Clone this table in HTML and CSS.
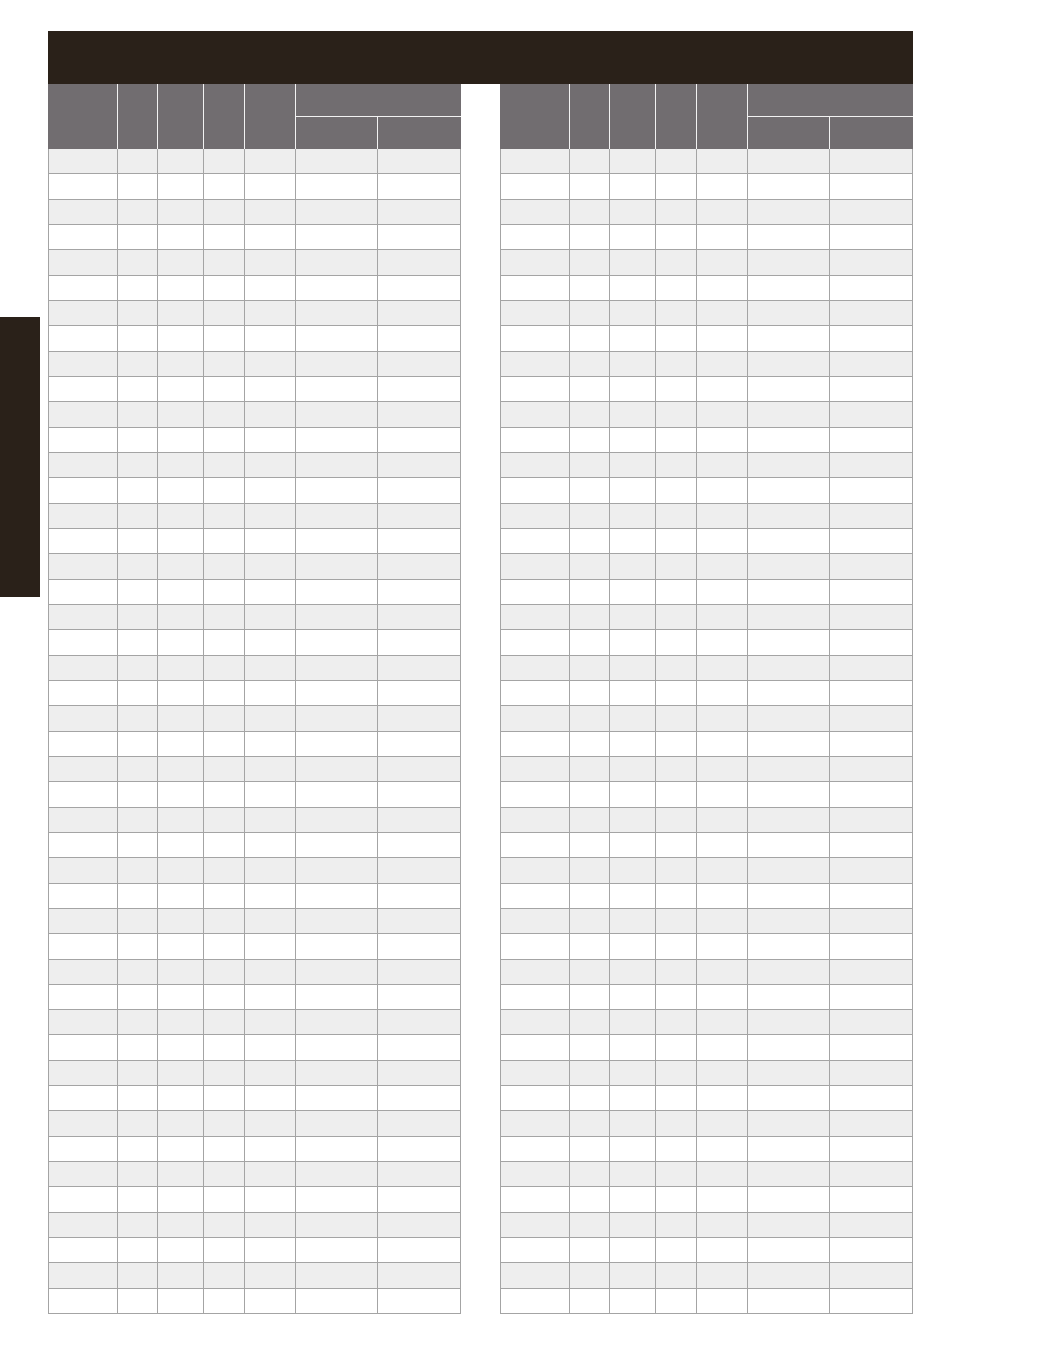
FILE: index.html
```html
<!DOCTYPE html>
<html lang="en">
<head>
<meta charset="utf-8">
<title>Table sheet</title>
<link rel="stylesheet" href="styles.css">
</head>
<body>
<div class="page">
  <div class="tab-col"><div class="side-tab"></div></div>
  <main class="main">
    <div class="banner"></div>
    <div class="tables">
      <table class="grid">
        <colgroup><col class="c1"><col class="c2"><col class="c3"><col class="c4"><col class="c5"><col class="c6"><col class="c7"></colgroup>
        <thead>
          <tr class="h1"><th rowspan="2"></th><th rowspan="2"></th><th rowspan="2"></th><th rowspan="2"></th><th rowspan="2"></th><th colspan="2" class="group"></th></tr>
          <tr class="h2"><th></th><th class="last"></th></tr>
        </thead>
        <tbody>
          <tr><td></td><td></td><td></td><td></td><td></td><td></td><td></td></tr>
          <tr><td></td><td></td><td></td><td></td><td></td><td></td><td></td></tr>
          <tr><td></td><td></td><td></td><td></td><td></td><td></td><td></td></tr>
          <tr><td></td><td></td><td></td><td></td><td></td><td></td><td></td></tr>
          <tr><td></td><td></td><td></td><td></td><td></td><td></td><td></td></tr>
          <tr><td></td><td></td><td></td><td></td><td></td><td></td><td></td></tr>
          <tr><td></td><td></td><td></td><td></td><td></td><td></td><td></td></tr>
          <tr><td></td><td></td><td></td><td></td><td></td><td></td><td></td></tr>
          <tr><td></td><td></td><td></td><td></td><td></td><td></td><td></td></tr>
          <tr><td></td><td></td><td></td><td></td><td></td><td></td><td></td></tr>
          <tr><td></td><td></td><td></td><td></td><td></td><td></td><td></td></tr>
          <tr><td></td><td></td><td></td><td></td><td></td><td></td><td></td></tr>
          <tr><td></td><td></td><td></td><td></td><td></td><td></td><td></td></tr>
          <tr><td></td><td></td><td></td><td></td><td></td><td></td><td></td></tr>
          <tr><td></td><td></td><td></td><td></td><td></td><td></td><td></td></tr>
          <tr><td></td><td></td><td></td><td></td><td></td><td></td><td></td></tr>
          <tr><td></td><td></td><td></td><td></td><td></td><td></td><td></td></tr>
          <tr><td></td><td></td><td></td><td></td><td></td><td></td><td></td></tr>
          <tr><td></td><td></td><td></td><td></td><td></td><td></td><td></td></tr>
          <tr><td></td><td></td><td></td><td></td><td></td><td></td><td></td></tr>
          <tr><td></td><td></td><td></td><td></td><td></td><td></td><td></td></tr>
          <tr><td></td><td></td><td></td><td></td><td></td><td></td><td></td></tr>
          <tr><td></td><td></td><td></td><td></td><td></td><td></td><td></td></tr>
          <tr><td></td><td></td><td></td><td></td><td></td><td></td><td></td></tr>
          <tr><td></td><td></td><td></td><td></td><td></td><td></td><td></td></tr>
          <tr><td></td><td></td><td></td><td></td><td></td><td></td><td></td></tr>
          <tr><td></td><td></td><td></td><td></td><td></td><td></td><td></td></tr>
          <tr><td></td><td></td><td></td><td></td><td></td><td></td><td></td></tr>
          <tr><td></td><td></td><td></td><td></td><td></td><td></td><td></td></tr>
          <tr><td></td><td></td><td></td><td></td><td></td><td></td><td></td></tr>
          <tr><td></td><td></td><td></td><td></td><td></td><td></td><td></td></tr>
          <tr><td></td><td></td><td></td><td></td><td></td><td></td><td></td></tr>
          <tr><td></td><td></td><td></td><td></td><td></td><td></td><td></td></tr>
          <tr><td></td><td></td><td></td><td></td><td></td><td></td><td></td></tr>
          <tr><td></td><td></td><td></td><td></td><td></td><td></td><td></td></tr>
          <tr><td></td><td></td><td></td><td></td><td></td><td></td><td></td></tr>
          <tr><td></td><td></td><td></td><td></td><td></td><td></td><td></td></tr>
          <tr><td></td><td></td><td></td><td></td><td></td><td></td><td></td></tr>
          <tr><td></td><td></td><td></td><td></td><td></td><td></td><td></td></tr>
          <tr><td></td><td></td><td></td><td></td><td></td><td></td><td></td></tr>
          <tr><td></td><td></td><td></td><td></td><td></td><td></td><td></td></tr>
          <tr><td></td><td></td><td></td><td></td><td></td><td></td><td></td></tr>
          <tr><td></td><td></td><td></td><td></td><td></td><td></td><td></td></tr>
          <tr><td></td><td></td><td></td><td></td><td></td><td></td><td></td></tr>
          <tr><td></td><td></td><td></td><td></td><td></td><td></td><td></td></tr>
          <tr><td></td><td></td><td></td><td></td><td></td><td></td><td></td></tr>
        </tbody>
      </table>
      <table class="grid">
        <colgroup><col class="c1"><col class="c2"><col class="c3"><col class="c4"><col class="c5"><col class="c6"><col class="c7"></colgroup>
        <thead>
          <tr class="h1"><th rowspan="2"></th><th rowspan="2"></th><th rowspan="2"></th><th rowspan="2"></th><th rowspan="2"></th><th colspan="2" class="group"></th></tr>
          <tr class="h2"><th></th><th class="last"></th></tr>
        </thead>
        <tbody>
          <tr><td></td><td></td><td></td><td></td><td></td><td></td><td></td></tr>
          <tr><td></td><td></td><td></td><td></td><td></td><td></td><td></td></tr>
          <tr><td></td><td></td><td></td><td></td><td></td><td></td><td></td></tr>
          <tr><td></td><td></td><td></td><td></td><td></td><td></td><td></td></tr>
          <tr><td></td><td></td><td></td><td></td><td></td><td></td><td></td></tr>
          <tr><td></td><td></td><td></td><td></td><td></td><td></td><td></td></tr>
          <tr><td></td><td></td><td></td><td></td><td></td><td></td><td></td></tr>
          <tr><td></td><td></td><td></td><td></td><td></td><td></td><td></td></tr>
          <tr><td></td><td></td><td></td><td></td><td></td><td></td><td></td></tr>
          <tr><td></td><td></td><td></td><td></td><td></td><td></td><td></td></tr>
          <tr><td></td><td></td><td></td><td></td><td></td><td></td><td></td></tr>
          <tr><td></td><td></td><td></td><td></td><td></td><td></td><td></td></tr>
          <tr><td></td><td></td><td></td><td></td><td></td><td></td><td></td></tr>
          <tr><td></td><td></td><td></td><td></td><td></td><td></td><td></td></tr>
          <tr><td></td><td></td><td></td><td></td><td></td><td></td><td></td></tr>
          <tr><td></td><td></td><td></td><td></td><td></td><td></td><td></td></tr>
          <tr><td></td><td></td><td></td><td></td><td></td><td></td><td></td></tr>
          <tr><td></td><td></td><td></td><td></td><td></td><td></td><td></td></tr>
          <tr><td></td><td></td><td></td><td></td><td></td><td></td><td></td></tr>
          <tr><td></td><td></td><td></td><td></td><td></td><td></td><td></td></tr>
          <tr><td></td><td></td><td></td><td></td><td></td><td></td><td></td></tr>
          <tr><td></td><td></td><td></td><td></td><td></td><td></td><td></td></tr>
          <tr><td></td><td></td><td></td><td></td><td></td><td></td><td></td></tr>
          <tr><td></td><td></td><td></td><td></td><td></td><td></td><td></td></tr>
          <tr><td></td><td></td><td></td><td></td><td></td><td></td><td></td></tr>
          <tr><td></td><td></td><td></td><td></td><td></td><td></td><td></td></tr>
          <tr><td></td><td></td><td></td><td></td><td></td><td></td><td></td></tr>
          <tr><td></td><td></td><td></td><td></td><td></td><td></td><td></td></tr>
          <tr><td></td><td></td><td></td><td></td><td></td><td></td><td></td></tr>
          <tr><td></td><td></td><td></td><td></td><td></td><td></td><td></td></tr>
          <tr><td></td><td></td><td></td><td></td><td></td><td></td><td></td></tr>
          <tr><td></td><td></td><td></td><td></td><td></td><td></td><td></td></tr>
          <tr><td></td><td></td><td></td><td></td><td></td><td></td><td></td></tr>
          <tr><td></td><td></td><td></td><td></td><td></td><td></td><td></td></tr>
          <tr><td></td><td></td><td></td><td></td><td></td><td></td><td></td></tr>
          <tr><td></td><td></td><td></td><td></td><td></td><td></td><td></td></tr>
          <tr><td></td><td></td><td></td><td></td><td></td><td></td><td></td></tr>
          <tr><td></td><td></td><td></td><td></td><td></td><td></td><td></td></tr>
          <tr><td></td><td></td><td></td><td></td><td></td><td></td><td></td></tr>
          <tr><td></td><td></td><td></td><td></td><td></td><td></td><td></td></tr>
          <tr><td></td><td></td><td></td><td></td><td></td><td></td><td></td></tr>
          <tr><td></td><td></td><td></td><td></td><td></td><td></td><td></td></tr>
          <tr><td></td><td></td><td></td><td></td><td></td><td></td><td></td></tr>
          <tr><td></td><td></td><td></td><td></td><td></td><td></td><td></td></tr>
          <tr><td></td><td></td><td></td><td></td><td></td><td></td><td></td></tr>
          <tr><td></td><td></td><td></td><td></td><td></td><td></td><td></td></tr>
        </tbody>
      </table>
    </div>
  </main>
</div>
</body>
</html>
```

FILE: styles.css
```css
* { box-sizing: border-box; }

html, body {
  margin: 0;
  padding: 0;
  background: #ffffff;
  font-family: "Liberation Sans", Arial, sans-serif;
}

.page {
  display: flex;
  align-items: flex-start;
  width: 1055px;
  min-height: 1369px;
}

.tab-col {
  width: 40px;
  flex: none;
}

.side-tab {
  margin-top: 317px;
  width: 40px;
  height: 280px;
  background: #2a2119;
}

.main {
  margin-left: 8px;
  margin-top: 31px;
  width: 865px;
  flex: none;
}

.banner {
  height: 53px;
  background: #2a2119;
}

.tables {
  display: flex;
  gap: 39px;
  align-items: flex-start;
}

.grid {
  width: 413px;
  table-layout: fixed;
  border-collapse: separate;
  border-spacing: 0;
  flex: none;
}

.c1 { width: 70px; }
.c2 { width: 40px; }
.c3 { width: 46px; }
.c4 { width: 41px; }
.c5 { width: 51px; }
.c6 { width: 82px; }
.c7 { width: 83px; }

.grid th {
  padding: 0;
  background: #716d70;
  border-right: 1px solid #f2f2f2;
}

.grid th.group,
.grid th.last {
  border-right: none;
}

.grid .h1 { height: 33px; }
.grid .h2 { height: 32px; }

.grid th.group {
  border-bottom: 1px solid #f2f2f2;
}

.grid td {
  padding: 0;
  height: 25.33px;
  border-right: 1px solid #a4a4a4;
  border-bottom: 1px solid #a4a4a4;
}

.grid td:first-child {
  border-left: 1px solid #a4a4a4;
}

.grid tbody tr:nth-child(odd) td {
  background: #eeeeee;
}

.grid tbody tr:nth-child(even) td {
  background: #ffffff;
}
```
